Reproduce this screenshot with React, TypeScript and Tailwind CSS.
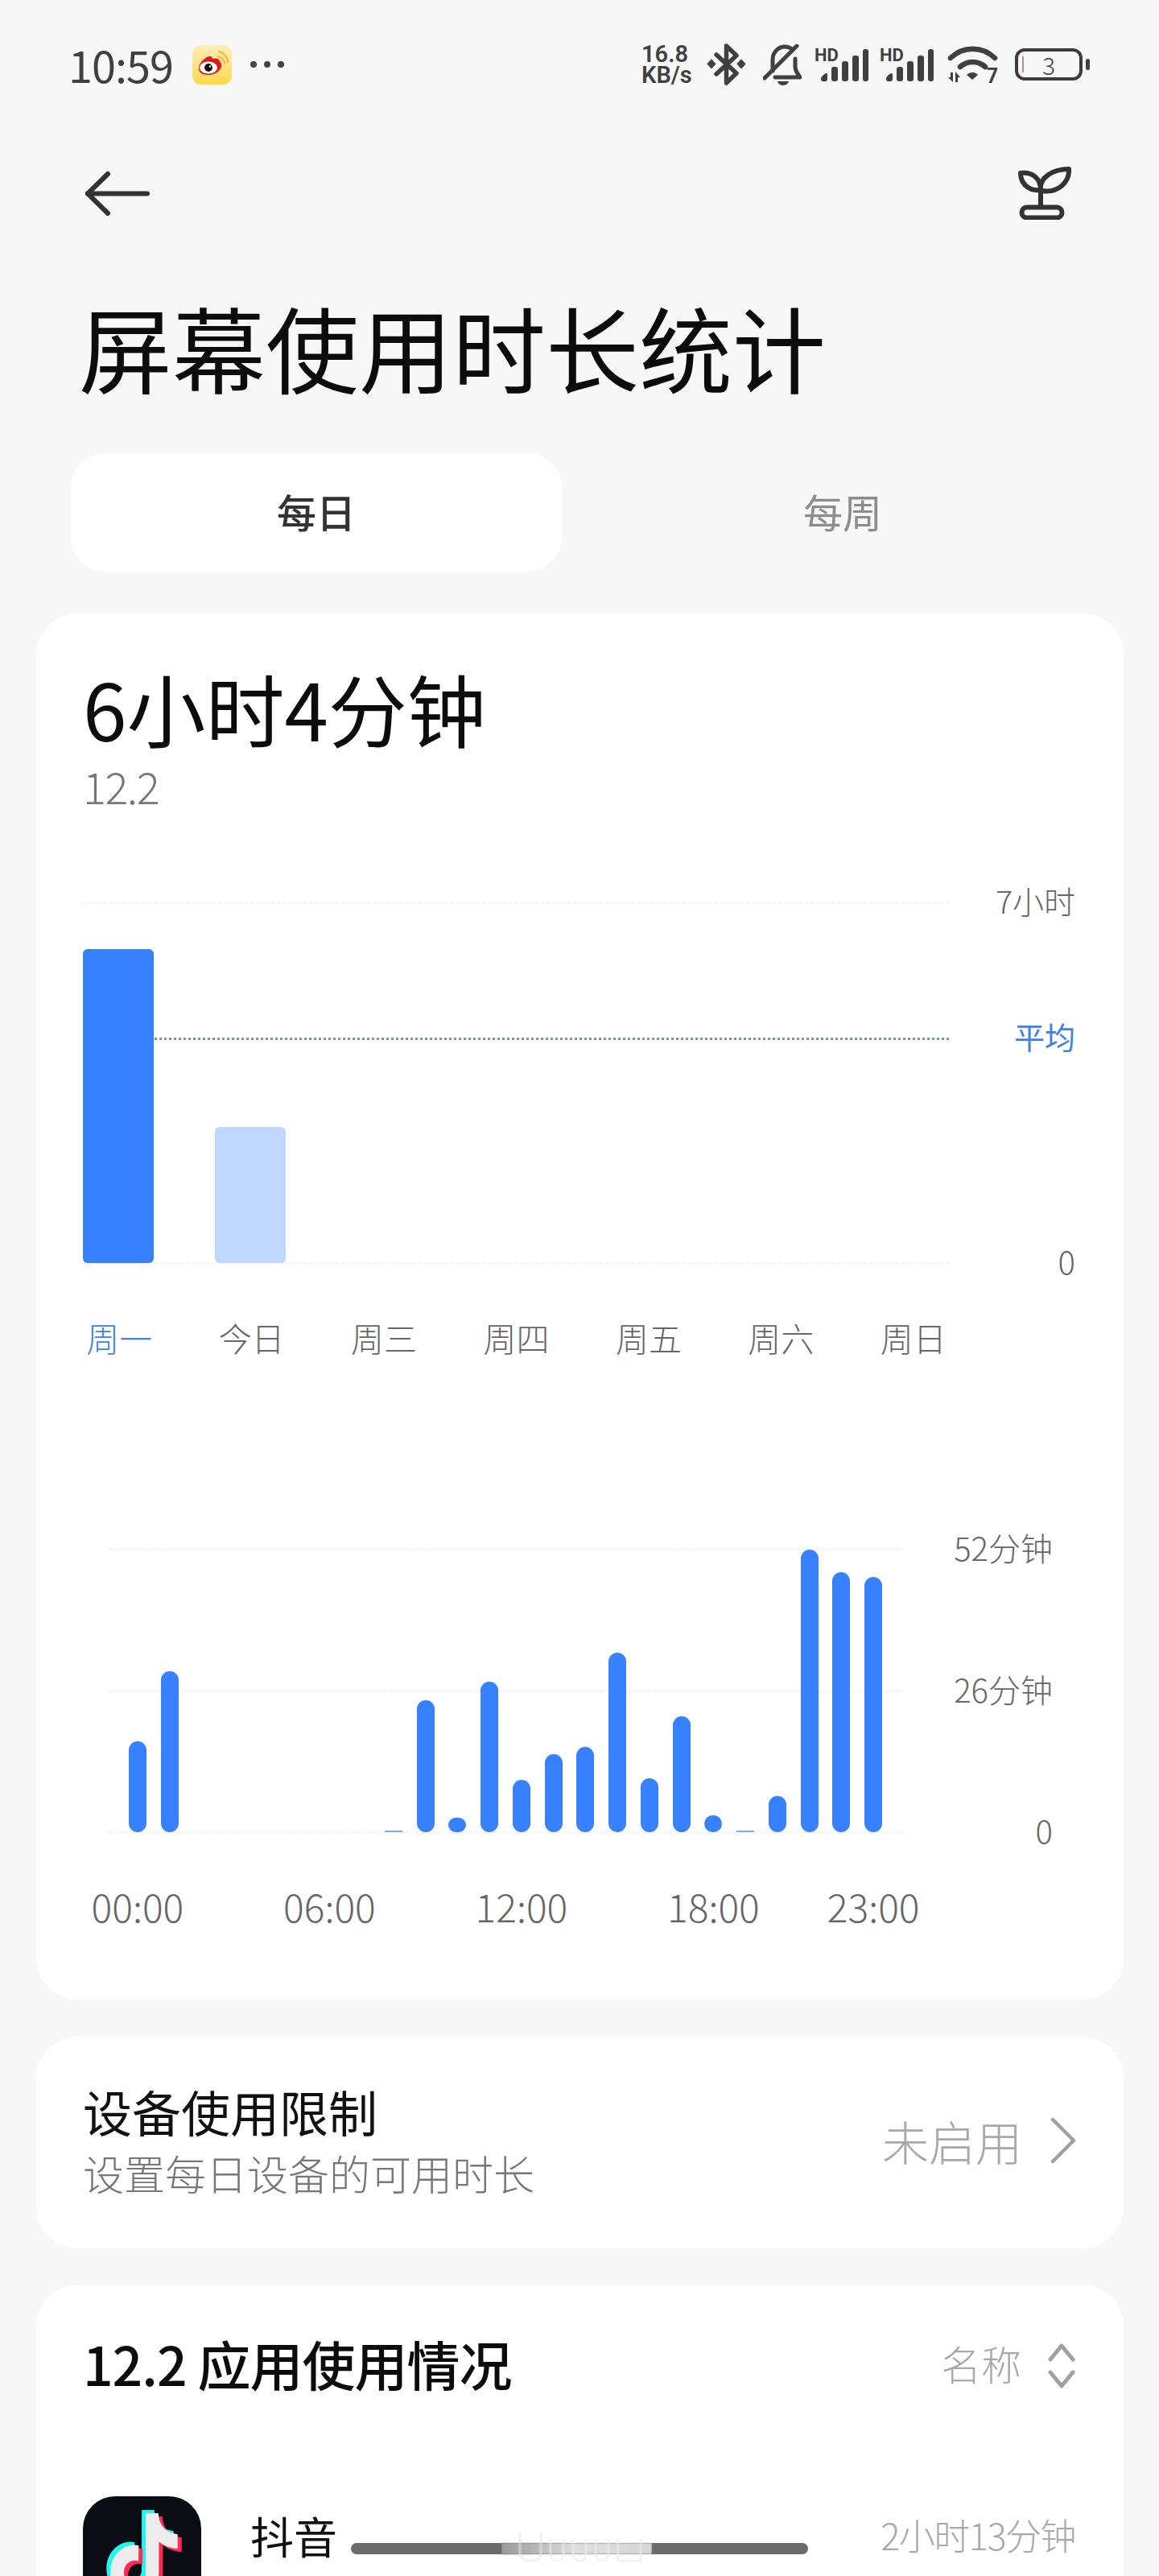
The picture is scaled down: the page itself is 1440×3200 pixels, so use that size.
const WEEK_LABELS = ['周一', '今日', '周三', '周四', '周五', '周六', '周日'];

const HOURS = [113, 200, 0, 0, 0, 0, 0, 0, 2, 164, 18, 187, 65, 97, 106, 223, 67, 144, 21, 2, 45, 351, 323, 317];

const TIKTOK =
  'M12.525.02c1.31-.02 2.61-.01 3.91-.02.08 1.53.63 3.09 1.75 4.17 1.12 1.11 2.7 1.62 4.24 1.79v4.03c-1.44-.05-2.89-.35-4.2-.97-.57-.26-1.1-.59-1.62-.93-.01 2.92.01 5.84-.02 8.75-.08 1.4-.54 2.79-1.35 3.94-1.31 1.92-3.58 3.17-5.91 3.21-1.43.08-2.86-.31-4.08-1.03-2.02-1.19-3.44-3.37-3.65-5.71-.02-.5-.03-1-.01-1.49.18-1.9 1.12-3.72 2.58-4.96 1.66-1.44 3.98-2.13 6.15-1.72.02 1.48-.04 2.96-.04 4.44-.99-.32-2.15-.23-3.02.37-.63.41-1.11 1.04-1.36 1.75-.21.51-.15 1.07-.14 1.61.24 1.64 1.82 3.02 3.5 2.87 1.12-.01 2.19-.66 2.77-1.61.19-.33.4-.67.41-1.06.1-1.79.06-3.57.07-5.36.01-4.03-.01-8.05.02-12.07z';

function Weibo() {
  return (
    <div className="h-[49px] w-[49px] rounded-[11px] bg-gradient-to-b from-[#ffeeb8] to-[#ffd83c]">
      <svg viewBox="0 0 49 49" className="h-full w-full">
        <path d="M31 14C37 15 40 19 40 24" fill="none" stroke="#f2b544" strokeWidth="2" />
        <path d="M32 8C39 9 44 15 44 22" fill="none" stroke="#f2b544" strokeWidth="2" />
        <path
          d="M8 29C8 23 13 18 18 15C22 13 25 14 25 17C29 16 33 16 34 20C37 24 37 28 33 32C29 36 24 37 19 37C12 37 8 34 8 29Z"
          fill="#dd1a1e"
        />
        <ellipse cx="20" cy="28" rx="11" ry="7.5" fill="#fff" />
        <circle cx="20" cy="28" r="5" fill="#111" />
        <circle cx="22" cy="26.5" r="1.3" fill="#fff" />
      </svg>
    </div>
  );
}

function Signal() {
  return (
    <div className="relative h-[41px] w-[67px]">
      <span className="absolute top-0 left-0 text-[22px] leading-[17px] font-bold font-['Roboto',sans-serif] text-[#404040]">
        HD
      </span>
      <svg viewBox="0 0 67 41" className="h-[41px] w-[67px]" fill="#404040">
        <path d="M8 38C8 35 11 33 14 31C16 31 16 32 16 33V38C16 40 15 41 14 41H10C9 41 8 40 8 38Z" />
        <rect x="21" y="23" width="8" height="18" rx="3" />
        <rect x="34" y="16" width="8" height="25" rx="3" />
        <rect x="47" y="9" width="8" height="32" rx="3" />
        <rect x="60" y="1" width="7" height="40" rx="3" />
      </svg>
    </div>
  );
}

function StatusBar() {
  return (
    <div className="flex h-[160px] items-center justify-between pr-[86px] pl-[85px] text-[#404040]">
      <div className="flex items-center">
        <span className="w-[128px] text-[54px] leading-none tracking-[-1px]">10:59</span>
        <div className="ml-[26px]">
          <Weibo />
        </div>
        <div className="ml-[23px] flex gap-[9px]">
          <span className="h-[8px] w-[8px] rounded-full bg-[#444]" />
          <span className="h-[8px] w-[8px] rounded-full bg-[#444]" />
          <span className="h-[8px] w-[8px] rounded-full bg-[#444]" />
        </div>
      </div>
      <div className="flex items-center">
        <div className="flex w-[68px] flex-col text-[29px] leading-[26px] font-semibold font-['Roboto',sans-serif]">
          <span>16.8</span>
          <span>KB/s</span>
        </div>
        <svg viewBox="0 0 49 52" className="ml-[13px] h-[52px] w-[49px]" fill="none" stroke="#404040" strokeWidth="5.5" strokeLinejoin="round" strokeLinecap="round">
          <path d="M12 14L37 37L24.5 49V3L37 15L12 38" />
          <path d="M6 20L11 25.5L6 31L1 25.5Z" fill="#404040" strokeWidth="1" />
          <path d="M43 20L48 25.5L43 31L38 25.5Z" fill="#404040" strokeWidth="1" />
        </svg>
        <svg viewBox="0 0 48 51" className="ml-[21px] h-[51px] w-[48px]" fill="none" stroke="#404040" strokeWidth="5" strokeLinecap="round" strokeLinejoin="round">
          <path d="M12 33V19C12 10 19 3 27 3C31 3 34 4 37 7" />
          <path d="M40 18V28C40 33 43 37 46 41H15" />
          <path d="M2 42L42 2" />
          <path d="M18 46H32C31 50 27 51 25 51C22 51 19 50 18 46Z" fill="#404040" stroke="none" />
        </svg>
        <div className="ml-[16px]">
          <Signal />
        </div>
        <div className="ml-[14px]">
          <Signal />
        </div>
        <div className="relative ml-[17px] h-[48px] w-[63px]">
          <svg viewBox="0 0 63 48" className="h-[48px] w-[63px]" fill="#404040">
            <path d="M4 16C20 1 43 1 59 16" fill="none" stroke="#404040" strokeWidth="6.5" strokeLinecap="round" />
            <path d="M16 27C25 19 38 19 47 27" fill="none" stroke="#404040" strokeWidth="6.5" strokeLinecap="round" />
            <path d="M24 37C28 33 35 33 38 37L31 43Z" />
            <path d="M4 34H7V46L1 40H4Z" />
            <path d="M10 46H13V40H16L10 33Z" />
          </svg>
          <span className="absolute right-0 bottom-0 text-[25px] leading-[18px] font-bold font-['Roboto',sans-serif]">
            7
          </span>
        </div>
        <div className="relative ml-[21px] flex h-[40px] w-[84px] items-center justify-center rounded-[12px] border-[4px] border-[#3c3c3c]">
          <span className="absolute top-[6px] left-[5px] h-[20px] w-[2px] bg-[#c08a8a]" />
          <span className="text-[30px] leading-none font-light">3</span>
        </div>
        <span className="ml-[4px] h-[14px] w-[5px] rounded-full bg-[#404040]" />
      </div>
    </div>
  );
}

function NavBar() {
  return (
    <div className="flex h-[160px] items-center justify-between pr-[109px] pl-[106px]">
      <svg viewBox="0 0 80 55" className="h-[55px] w-[80px]" fill="none" stroke="#333" strokeWidth="6" strokeLinecap="round" strokeLinejoin="round">
        <path d="M3 27.5H77" />
        <path d="M28 3L3 27.5L28 52" />
      </svg>
      <svg viewBox="0 0 66 66" className="h-[66px] w-[66px]" fill="none" stroke="#333" strokeWidth="6" strokeLinejoin="round">
        <path d="M28 29C26 13 44 3 63 3C64 20 49 33 30 30Z" />
        <path d="M28 29C11 31 3 19 3 8C18 6 28 15 28 29Z" />
        <path d="M28 29V50" />
        <rect x="4.5" y="50.5" width="50" height="13" rx="6.5" />
      </svg>
    </div>
  );
}

function Tabs() {
  return (
    <div className="mt-[25px] flex pr-[44px] pl-[88px]">
      <div className="flex h-[147px] w-[610px] items-center justify-center rounded-[42px] bg-white pb-[4px] text-[49px] font-medium text-[#333]">
        每日
      </div>
      <div className="flex flex-1 items-center justify-center pb-[4px] text-[49px] text-[#8c8c8c]">每周</div>
    </div>
  );
}

function GridLine({ className, label, labelClass }: { className: string; label: string; labelClass: string }) {
  return (
    <div className={'absolute right-0 left-0 flex h-[2px] items-center justify-between ' + className}>
      <div className="flex-1" />
      <span className={'ml-auto -translate-y-[3px] leading-none ' + labelClass}>{label}</span>
    </div>
  );
}

function WeekChart() {
  return (
    <div className="mt-[114px] pl-[58px]">
      <div className="relative h-[449px] w-[1233px]">
        <div className="absolute top-0 left-0 w-[1076px] border-t-2 border-dotted border-[#efefef]" />
        <div className="absolute top-[448px] left-0 w-[1076px] border-t-2 border-dotted border-[#efefef]" />
        <div className="absolute top-[169px] left-[89px] w-[987px] border-t-[3px] border-dotted border-[#6d94c4]" />
        <GridLine className="top-0" label="7小时" labelClass="text-[39px] font-light text-[#666]" />
        <GridLine className="top-[169px]" label="平均" labelClass="text-[38px] text-[#3f82e0]" />
        <GridLine className="top-[448px]" label="0" labelClass="text-[40px] font-light text-[#666]" />
        <div className="relative flex h-full items-end gap-[76px]">
          <div className="h-[390px] w-[88px] rounded-[6px] bg-[#3781ff]" />
          <div className="h-[169px] w-[88px] rounded-[6px] bg-[#c0d8ff]" />
        </div>
      </div>
      <div className="-ml-[37px] mt-[68px] grid w-[1151px] grid-cols-7 text-center text-[41px] leading-[48px] font-light text-[#666]">
        {WEEK_LABELS.map((d, i) => (
          <span key={d} className={i === 0 ? 'text-[#3f82e0]' : ''}>
            {d}
          </span>
        ))}
      </div>
    </div>
  );
}

function HourChart() {
  return (
    <div className="mt-[239px] pl-[88px]">
      <div className="relative h-[352px] w-[1175px]">
        <div className="absolute top-0 left-0 w-[990px] border-t-2 border-dotted border-[#f0f0f0]" />
        <div className="absolute top-[176px] left-0 w-[990px] border-t-2 border-dotted border-[#f0f0f0]" />
        <div className="absolute top-[351px] left-0 w-[990px] border-t-2 border-dotted border-[#f0f0f0]" />
        <GridLine className="top-0" label="52分钟" labelClass="text-[40px] font-light text-[#666]" />
        <GridLine className="top-[176px]" label="26分钟" labelClass="text-[40px] font-light text-[#666]" />
        <GridLine className="top-[351px]" label="0" labelClass="text-[40px] font-light text-[#666]" />
        <div className="relative ml-[18px] grid h-full w-[954px] grid-cols-[repeat(24,minmax(0,1fr))] items-end">
          {HOURS.map((h, i) => (
            <div key={i} className="flex justify-center">
              {h > 2 && <div className="w-[22px] rounded-full bg-[#3781ff]" style={{ height: h }} />}
              {h === 2 && <div className="h-[2px] w-[22px] bg-[#7ea9e6]" />}
            </div>
          ))}
        </div>
      </div>
      <div className="mt-[65px] ml-[18px] grid w-[954px] grid-cols-[repeat(24,minmax(0,1fr))] text-[48px] leading-[52px] font-light text-[#666]">
        <span className="col-start-1 flex justify-center whitespace-nowrap">00:00</span>
        <span className="col-start-7 flex justify-center whitespace-nowrap">06:00</span>
        <span className="col-start-13 flex justify-center whitespace-nowrap">12:00</span>
        <span className="col-start-19 flex justify-center whitespace-nowrap">18:00</span>
        <span className="col-start-24 flex justify-center whitespace-nowrap">23:00</span>
      </div>
    </div>
  );
}

function HomeBar() {
  return (
    <div className="absolute top-[3159px] left-[436px] h-[14px] w-[568px] rounded-full bg-[#6b6b6b]">
      <div className="absolute -top-[13px] left-[187px] h-[40px] w-[187px] overflow-hidden">
        <div className="absolute top-[13px] left-0 h-[14px] w-full bg-gradient-to-r from-[#9a9a9a] via-[#dedede] to-[#d6d6d6] blur-[1px]" />
        <div className="absolute top-0 left-[22px] h-[36px] w-[28px] rounded-b-[10px] border-2 border-t-0 border-[#e6e6e6] blur-[1px]" />
        <div className="absolute top-[8px] left-[60px] h-[28px] w-[18px] rounded-b-[8px] border-2 border-t-0 border-[#ececec] blur-[1px]" />
        <div className="absolute top-[8px] left-[88px] h-[28px] w-[18px] rounded-b-[8px] border-2 border-t-0 border-[#ececec] blur-[1px]" />
        <div className="absolute top-[8px] left-[116px] h-[28px] w-[18px] rounded-b-[8px] border-2 border-t-0 border-[#ececec] blur-[1px]" />
        <div className="absolute top-[8px] left-[144px] h-[28px] w-[30px] border-2 border-t-0 border-[#ececec] blur-[1px]" />
      </div>
    </div>
  );
}

export default function App() {
  return (
    <div className="relative h-[3200px] w-[1440px] overflow-hidden bg-[#f7f7f7] font-['Noto_Sans_CJK_SC',sans-serif]">
      <StatusBar />
      <NavBar />
      <h1 className="flex h-[218px] items-center pl-[98px] text-[116px] leading-none font-normal text-[#0c0c0c]">
        屏幕使用时长统计
      </h1>
      <Tabs />

      <section className="mt-[52px] ml-[45px] h-[1722px] w-[1351px] rounded-[52px] bg-white pt-[67px]">
        <div className="pl-[58px] text-[98px] leading-[98px] text-[#0c0c0c]">6小时4分钟</div>
        <div className="mt-[19px] pl-[58px] text-[54px] leading-[60px] font-light tracking-[-1.5px] text-[#777]">
          12.2
        </div>
        <WeekChart />
        <HourChart />
      </section>

      <section className="mt-[46px] ml-[45px] flex h-[263px] w-[1351px] items-center justify-between rounded-[52px] bg-white pr-[59px] pb-[6px] pl-[58px]">
        <div>
          <div className="text-[61px] leading-[70px] text-[#111]">设备使用限制</div>
          <div className="mt-[11px] text-[51px] leading-[60px] font-light text-[#777]">设置每日设备的可用时长</div>
        </div>
        <div className="flex items-center gap-[35px]">
          <span className="text-[58px] leading-none font-light text-[#a8a8a8]">未启用</span>
          <svg viewBox="0 0 32 58" className="h-[58px] w-[32px]" fill="none" stroke="#a0a0a0" strokeWidth="4.5" strokeLinecap="round" strokeLinejoin="round">
            <path d="M3 3L29 29L3 55" />
          </svg>
        </div>
      </section>

      <section className="mt-[45px] ml-[45px] h-[500px] w-[1351px] rounded-[52px] bg-white pt-[60px]">
        <div className="flex items-center justify-between pr-[60px] pl-[58px]">
          <span className="text-[66px] leading-[74px] font-medium tracking-[-1px] text-[#0c0c0c]">12.2 应用使用情况</span>
          <div className="flex items-center gap-[33px]">
            <span className="text-[50px] leading-none font-light text-[#a8a8a8]">名称</span>
            <svg viewBox="0 0 34 56" className="h-[56px] w-[34px] translate-y-[4px]" fill="none" stroke="#a0a0a0" strokeWidth="5" strokeLinecap="round" strokeLinejoin="round">
              <path d="M3 20L17 3L31 20" />
              <path d="M3 36L17 53L31 36" />
            </svg>
          </div>
        </div>
        <div className="mt-[129px] flex pr-[60px] pl-[58px]">
          <svg viewBox="0 0 147 147" className="h-[147px] w-[147px] shrink-0 rounded-[40px] bg-[#0b0c14]">
            <g transform="translate(23 17) scale(4 4.4)">
              <path d={TIKTOK} fill="#25f4ee" />
            </g>
            <g transform="translate(33 25) scale(4 4.4)">
              <path d={TIKTOK} fill="#fe2c55" />
            </g>
            <g transform="translate(28 21) scale(4 4.4)">
              <path d={TIKTOK} fill="#ececec" />
            </g>
          </svg>
          <span className="mt-[17px] ml-[61px] text-[54px] leading-[64px] text-[#111]">抖音</span>
          <span className="mt-[20px] ml-auto text-[45px] leading-[56px] font-light tracking-[-1.5px] text-[#a8a8a8]">
            2小时13分钟
          </span>
        </div>
      </section>

      <HomeBar />
    </div>
  );
}
